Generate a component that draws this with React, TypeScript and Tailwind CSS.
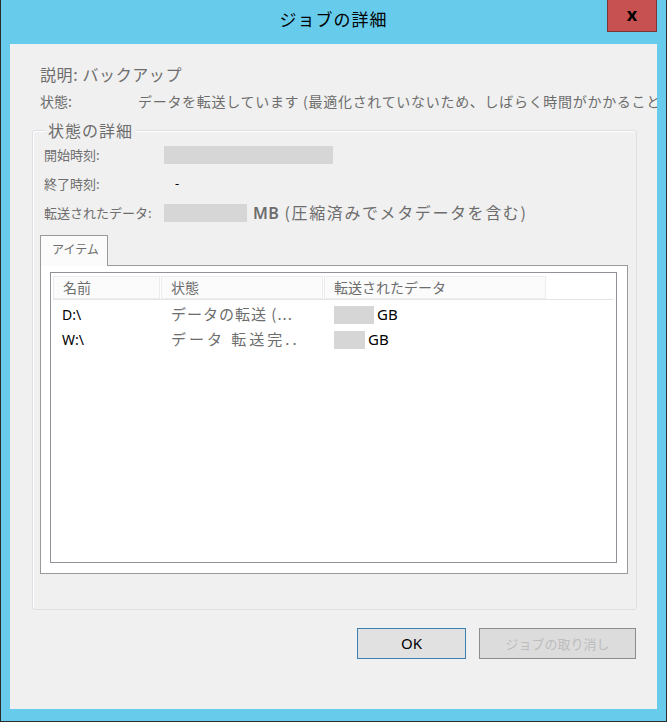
const jp = "font-['Noto_Sans_CJK_JP',sans-serif]";
const latin = "font-['Noto_Sans','Noto_Sans_CJK_JP',sans-serif]";

const Redacted = ({ w }: { w: string }) => <div className={`${w} h-[18px] bg-[#d6d6d6]`} />;

const DetailRow: React.FC<{ label: string; children?: React.ReactNode }> = ({ label, children }) => (
  <div className="h-[29px] flex items-center">
    <div className="w-[120px] text-[13px] text-[#6d6d6d] whitespace-nowrap">{label}</div>
    {children}
  </div>
);

const items = [
  { name: "D:\\", status: "データの転送 (...", size: "w-[40px]", tracking: "tracking-[1px]" },
  { name: "W:\\", status: "データ 転送完..", size: "w-[31px]", tracking: "tracking-[3px]" },
];

export default function App() {
  return (
    <div className={`w-[667px] h-[722px] bg-[#67cbeb] border-l border-r border-b border-[#2b2b2b] flex flex-col overflow-hidden ${jp}`}>
      <div className="relative h-[44px] shrink-0 flex items-center justify-center">
        <span className="text-[17px] text-black -mt-[6px] tracking-[1px]">ジョブの詳細</span>
        <button className="absolute top-0 right-[9px] w-[50px] h-[32px] bg-[#c75050] border border-t-0 border-[#7a3535] flex items-center justify-center">
          <span className={`text-[18px] font-bold leading-none text-black -mt-[3px] ${latin}`}>x</span>
        </button>
      </div>

      <div className="mx-[9px] h-[665px] bg-[#f0f0f0] flex flex-col overflow-hidden">
        <div className="pl-[30px] pt-[19px]">
          <div className="h-[22px] flex items-center text-[16px] text-[#6d6d6d] whitespace-nowrap tracking-[0.6px]">説明: バックアップ</div>
          <div className="mt-[5px] h-[22px] flex items-center text-[14px] text-[#6d6d6d] whitespace-nowrap">
            <span className="w-[98px] shrink-0">状態:</span>
            <span className="tracking-[0.7px]">データを転送しています (最適化されていないため、しばらく時間がかかること</span>
          </div>
        </div>

        <div className="relative ml-[22px] mt-[18px] w-[605px] h-[480px] border border-[#dcdfe3] rounded-[3px] shadow-[inset_1px_1px_0_#ffffff]">
          <span className="absolute -top-[12px] left-[12px] px-[3px] bg-[#f0f0f0] text-[16px] leading-[22px] text-[#6d6d6d] tracking-[1px]">状態の詳細</span>

          <div className="pt-[9px] pl-[11px]">
            <DetailRow label="開始時刻:">
              <Redacted w="w-[169px]" />
            </DetailRow>
            <DetailRow label="終了時刻:">
              <span className={`ml-[11px] text-[13px] text-black ${latin}`}>-</span>
            </DetailRow>
            <DetailRow label="転送されたデータ:">
              <Redacted w="w-[83px]" />
              <span className="ml-[6px] text-[16px] text-[#6d6d6d] whitespace-nowrap tracking-[1.6px]">
                <span className={`font-semibold tracking-[0.5px] ${latin}`}>MB</span> (圧縮済みでメタデータを含む)
              </span>
            </DetailRow>
          </div>

          <div className="ml-[7px] mt-[8px]">
            <div className="relative z-10 w-[68px] h-[31px] -mb-px bg-[#fbfbfb] border border-b-0 border-[#9a9a9a] pl-[11px] pt-[4px] text-[12px] text-[#6d6d6d]">
              アイテム
            </div>
            <div className="w-[588px] h-[309px] border border-[#9a9a9a] bg-white pt-[6px] pl-[9px]">
              <div className="w-[567px] h-[291px] border border-[#8f9399] bg-white px-[2px] pt-[3px]">
                <div className="h-[24px] flex border-b border-[#e5e5e5] text-[14px] text-[#6d6d6d]">
                  <div className="w-[107px] h-full bg-[#fbfbfb] border border-[#ececec] pl-[9px] flex items-center">名前</div>
                  <div className="w-[162px] ml-[1px] h-full bg-[#fbfbfb] border border-[#ececec] pl-[9px] flex items-center">状態</div>
                  <div className="w-[222px] ml-[1px] h-full bg-[#fbfbfb] border border-[#ececec] pl-[9px] flex items-center">転送されたデータ</div>
                  <div className="flex-1" />
                </div>
                <div className="mt-[2px]">
                  {items.map((it) => (
                    <div key={it.name} className="h-[25px] flex items-center">
                      <div className={`w-[108px] pl-[9px] text-[14px] text-black ${latin}`}>{it.name}</div>
                      <div className={`w-[163px] pl-[10px] text-[15px] text-[#6d6d6d] whitespace-nowrap overflow-hidden ${it.tracking}`}>{it.status}</div>
                      <div className="flex items-center pl-[10px]">
                        <Redacted w={it.size} />
                        <span className={`ml-[3px] text-[15px] text-black ${latin}`}>GB</span>
                      </div>
                    </div>
                  ))}
                </div>
              </div>
            </div>
          </div>
        </div>

        <div className="mt-[18px] flex justify-end gap-[13px] pr-[21px]">
          <button className={`w-[109px] h-[31px] bg-[#e1e1e1] border border-[#3c7fb1] text-[15px] text-black ${latin}`}>OK</button>
          <button className="w-[157px] h-[31px] bg-[#dcdcdc] border border-[#8c8c8c] text-[13px] text-[#bdbdbd]">ジョブの取り消し</button>
        </div>
      </div>
    </div>
  );
}
